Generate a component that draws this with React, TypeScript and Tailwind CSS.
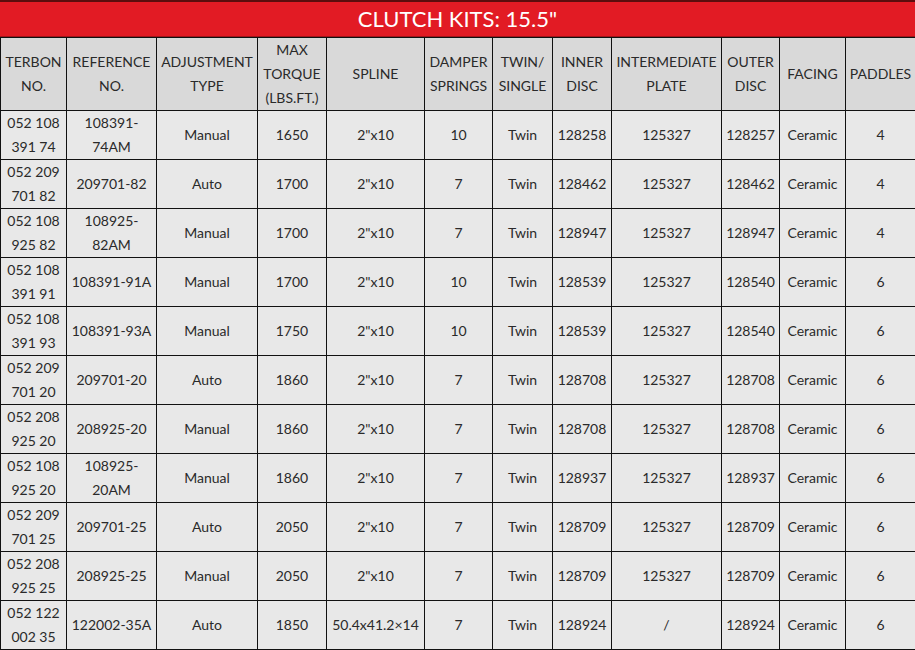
import React from 'react';

const cols = [66, 90, 101, 69, 98, 68, 60, 59, 110, 58, 66, 70];

const headers = [
  ['TERBON', 'NO.'],
  ['REFERENCE', 'NO.'],
  ['ADJUSTMENT', 'TYPE'],
  ['MAX', 'TORQUE', '(LBS.FT.)'],
  ['SPLINE'],
  ['DAMPER', 'SPRINGS'],
  ['TWIN/', 'SINGLE'],
  ['INNER', 'DISC'],
  ['INTERMEDIATE', 'PLATE'],
  ['OUTER', 'DISC'],
  ['FACING'],
  ['PADDLES'],
];

const rows: string[][][] = [
  [['052 108', '391 74'], ['108391-', '74AM'], ['Manual'], ['1650'], ['2"x10'], ['10'], ['Twin'], ['128258'], ['125327'], ['128257'], ['Ceramic'], ['4']],
  [['052 209', '701 82'], ['209701-82'], ['Auto'], ['1700'], ['2"x10'], ['7'], ['Twin'], ['128462'], ['125327'], ['128462'], ['Ceramic'], ['4']],
  [['052 108', '925 82'], ['108925-', '82AM'], ['Manual'], ['1700'], ['2"x10'], ['7'], ['Twin'], ['128947'], ['125327'], ['128947'], ['Ceramic'], ['4']],
  [['052 108', '391 91'], ['108391-91A'], ['Manual'], ['1700'], ['2"x10'], ['10'], ['Twin'], ['128539'], ['125327'], ['128540'], ['Ceramic'], ['6']],
  [['052 108', '391 93'], ['108391-93A'], ['Manual'], ['1750'], ['2"x10'], ['10'], ['Twin'], ['128539'], ['125327'], ['128540'], ['Ceramic'], ['6']],
  [['052 209', '701 20'], ['209701-20'], ['Auto'], ['1860'], ['2"x10'], ['7'], ['Twin'], ['128708'], ['125327'], ['128708'], ['Ceramic'], ['6']],
  [['052 208', '925 20'], ['208925-20'], ['Manual'], ['1860'], ['2"x10'], ['7'], ['Twin'], ['128708'], ['125327'], ['128708'], ['Ceramic'], ['6']],
  [['052 108', '925 20'], ['108925-', '20AM'], ['Manual'], ['1860'], ['2"x10'], ['7'], ['Twin'], ['128937'], ['125327'], ['128937'], ['Ceramic'], ['6']],
  [['052 209', '701 25'], ['209701-25'], ['Auto'], ['2050'], ['2"x10'], ['7'], ['Twin'], ['128709'], ['125327'], ['128709'], ['Ceramic'], ['6']],
  [['052 208', '925 25'], ['208925-25'], ['Manual'], ['2050'], ['2"x10'], ['7'], ['Twin'], ['128709'], ['125327'], ['128709'], ['Ceramic'], ['6']],
  [['052 122', '002 35'], ['122002-35A'], ['Auto'], ['1850'], ['50.4x41.2×14'], ['7'], ['Twin'], ['128924'], ['/'], ['128924'], ['Ceramic'], ['6']],
];

function Lines({ lines }: { lines: string[] }) {
  return (
    <>
      {lines.map((l, i) => (
        <div key={i}>{l}</div>
      ))}
    </>
  );
}

export default function App() {
  return (
    <div className="w-[915px] h-[650px] overflow-hidden bg-white text-[#2a2a2a] font-['Lato','Noto_Sans',sans-serif] text-[14px] leading-[24px]">
      <div className="h-[37px] bg-[#e21b24] border-t-2 border-[#5c0d0d] border-b border-b-[#a3141a] flex items-center justify-center text-white text-[22px] leading-none pb-px">
        CLUTCH KITS: 15.5"
      </div>
      <table className="table-fixed border-collapse w-[915px]">
        <colgroup>
          {cols.map((w, i) => (
            <col key={i} style={{ width: w }} />
          ))}
        </colgroup>
        <thead>
          <tr className="h-[73px] bg-[#d9d9d9]">
            {headers.map((h, i) => (
              <th key={i} className="border border-[#111] font-normal text-center px-0 align-middle">
                <Lines lines={h} />
              </th>
            ))}
          </tr>
        </thead>
        <tbody>
          {rows.map((r, ri) => (
            <tr key={ri} className="h-[49px] bg-[#e8e8e8]">
              {r.map((c, ci) => (
                <td key={ci} className="border border-[#111] text-center px-0 align-middle whitespace-nowrap">
                  <Lines lines={c} />
                </td>
              ))}
            </tr>
          ))}
        </tbody>
      </table>
    </div>
  );
}
